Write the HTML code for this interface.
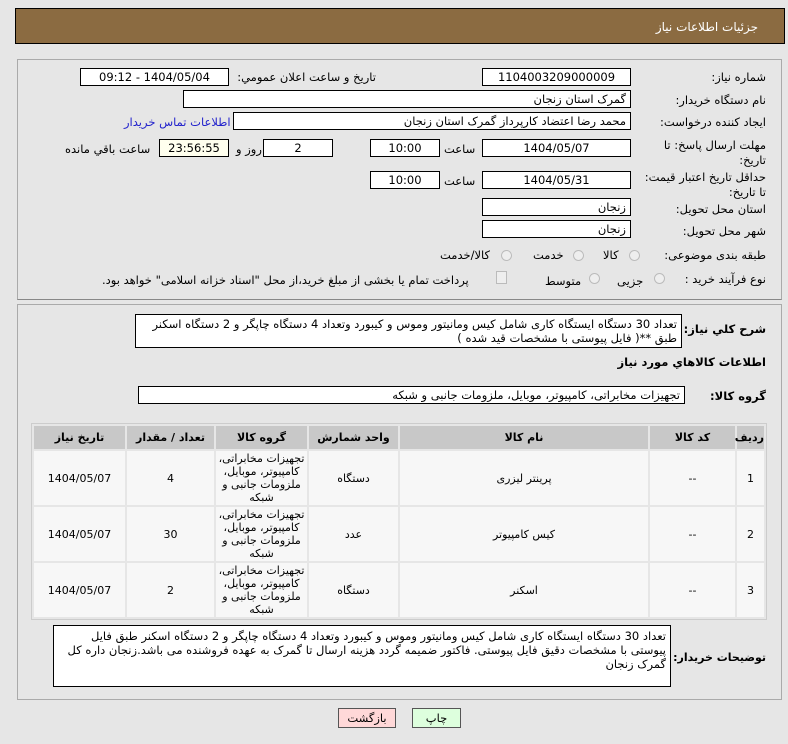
<!DOCTYPE html>
<html><head><meta charset="utf-8"><style>
body{margin:0;width:788px;height:744px;background:#e6e6e6;font-family:"DejaVu Sans","Liberation Sans",sans-serif;font-size:11.5px;color:#000;position:relative;overflow:hidden}
.a{position:absolute;white-space:nowrap}
.b{position:absolute;background:#fff;border:1px solid #000;box-sizing:border-box;direction:rtl;padding:0 4px;line-height:16px;white-space:nowrap;overflow:hidden}
.c{text-align:center}
.l{direction:rtl;text-align:right}
.r{position:absolute;width:11px;height:11px;border-radius:50%;border:1px solid #bbb;background:#eee;box-sizing:border-box}
table{position:absolute;left:31px;top:423px;width:736px;table-layout:fixed;border-collapse:separate;border-spacing:2px;background:#e6e6e6;border:1px solid #ccc;direction:rtl}
td,th{text-align:center;font-size:11px;padding:0}
th{background:#c8c8c8;height:23px;font-weight:bold}
td{background:#f7f7f7;height:54px;line-height:13px}
</style></head><body>
<div class="a" style="left:15px;top:8px;width:768px;height:34px;background:#8b6b41;border:1px solid #000"></div>
<div class="a" style="right:30px;top:20px;color:#fff;font-size:12px">جزئیات اطلاعات نیاز</div>
<div class="a" style="left:17px;top:59px;width:763px;height:239px;border:1px solid #aaa;border-bottom-color:#888"></div>
<div class="a" style="left:17px;top:304px;width:763px;height:394px;border:1px solid #aaa"></div>

<div class="a l" style="right:22px;top:70px">شماره نیاز:</div>
<div class="b c" style="left:482px;top:68px;width:149px;height:18px">1104003209000009</div>
<div class="a l" style="right:412px;top:70px">تاریخ و ساعت اعلان عمومي:</div>
<div class="b c" style="left:80px;top:68px;width:149px;height:18px">1404/05/04 - 09:12</div>

<div class="a l" style="right:22px;top:93px">نام دستگاه خريدار:</div>
<div class="b" style="left:183px;top:90px;width:448px;height:18px">گمرک استان زنجان</div>

<div class="a l" style="right:22px;top:115px">ایجاد کننده درخواست:</div>
<div class="b" style="left:233px;top:112px;width:398px;height:18px">محمد رضا اعتضاد کارپرداز گمرک استان زنجان</div>
<div class="a l" style="left:124px;top:115px;color:#2222cc">اطلاعات تماس خریدار</div>

<div class="a l" style="right:22px;top:138px;line-height:15px;text-align:right">مهلت ارسال پاسخ: تا<br>تاریخ:</div>
<div class="b c" style="left:482px;top:139px;width:149px;height:18px">1404/05/07</div>
<div class="a" style="left:444px;top:142px">ساعت</div>
<div class="b c" style="left:370px;top:139px;width:70px;height:18px">10:00</div>
<div class="b c" style="left:263px;top:139px;width:70px;height:18px">2</div>
<div class="a l" style="left:236px;top:142px">روز و</div>
<div class="b c" style="left:159px;top:139px;width:70px;height:18px;background:#ffffee">23:56:55</div>
<div class="a l" style="left:65px;top:142px">ساعت باقي مانده</div>

<div class="a l" style="right:22px;top:170px;line-height:15px;text-align:right">حداقل تاریخ اعتبار قیمت:<br>تا تاریخ:</div>
<div class="b c" style="left:482px;top:171px;width:149px;height:18px">1404/05/31</div>
<div class="a" style="left:444px;top:174px">ساعت</div>
<div class="b c" style="left:370px;top:171px;width:70px;height:18px">10:00</div>

<div class="a l" style="right:22px;top:202px">استان محل تحویل:</div>
<div class="b" style="left:482px;top:198px;width:149px;height:18px">زنجان</div>
<div class="a l" style="right:22px;top:224px">شهر محل تحویل:</div>
<div class="b" style="left:482px;top:220px;width:149px;height:18px">زنجان</div>

<div class="a l" style="right:22px;top:248px">طبقه بندی موضوعی:</div>
<div class="r" style="left:629px;top:250px"></div><div class="a" style="left:603px;top:248px">کالا</div>
<div class="r" style="left:573px;top:250px"></div><div class="a" style="left:533px;top:248px">خدمت</div>
<div class="r" style="left:501px;top:250px"></div><div class="a" style="left:440px;top:248px">کالا/خدمت</div>

<div class="a l" style="right:22px;top:272px">نوع فرآیند خرید :</div>
<div class="r" style="left:654px;top:273px"></div><div class="a" style="left:617px;top:274px">جزیی</div>
<div class="r" style="left:589px;top:273px"></div><div class="a" style="left:545px;top:274px">متوسط</div>
<div class="a" style="left:496px;top:271px;width:9px;height:11px;border:1px solid #bbb;background:#eee"></div>
<div class="a l" style="left:102px;top:273px">پرداخت تمام یا بخشی از مبلغ خرید،از محل "اسناد خزانه اسلامی" خواهد بود.</div>

<div class="a l" style="right:22px;top:322px;font-weight:bold">شرح کلي نياز:</div>
<div class="b" style="left:135px;top:314px;width:547px;height:34px;white-space:normal;line-height:14px;padding-top:2px">تعداد 30 دستگاه ایستگاه کاری شامل کیس ومانیتور وموس و کیبورد وتعداد 4 دستگاه چاپگر و 2 دستگاه اسکنر طبق **( فایل پیوستی با مشخصات قید شده )</div>
<div class="a l" style="right:22px;top:355px;font-weight:bold">اطلاعات کالاهاي مورد نياز</div>
<div class="a l" style="right:22px;top:389px;font-weight:bold">گروه کالا:</div>
<div class="b" style="left:138px;top:386px;width:547px;height:18px">تجهیزات مخابراتی، کامپیوتر، موبایل، ملزومات جانبی و شبکه</div>

<table>
<tr><th style="width:27px">ردیف</th><th style="width:85px">کد کالا</th><th style="width:248px">نام کالا</th><th style="width:89px">واحد شمارش</th><th style="width:91px">گروه کالا</th><th style="width:87px">تعداد / مقدار</th><th>تاریخ نیاز</th></tr>
<tr><td>1</td><td>--</td><td>پرینتر لیزری</td><td>دستگاه</td><td>تجهیزات مخابراتی، کامپیوتر، موبایل، ملزومات جانبی و شبکه</td><td>4</td><td>1404/05/07</td></tr>
<tr><td>2</td><td>--</td><td>کیس کامپیوتر</td><td>عدد</td><td>تجهیزات مخابراتی، کامپیوتر، موبایل، ملزومات جانبی و شبکه</td><td>30</td><td>1404/05/07</td></tr>
<tr><td>3</td><td>--</td><td>اسکنر</td><td>دستگاه</td><td>تجهیزات مخابراتی، کامپیوتر، موبایل، ملزومات جانبی و شبکه</td><td>2</td><td>1404/05/07</td></tr>
</table>

<div class="a l" style="right:22px;top:651px;font-weight:bold;font-size:11px">توضیحات خریدار:</div>
<div class="b" style="left:53px;top:625px;width:618px;height:62px;white-space:normal;line-height:14px;padding-top:3px">تعداد 30 دستگاه ایستگاه کاری شامل کیس ومانیتور وموس و کیبورد وتعداد 4 دستگاه چاپگر و 2 دستگاه اسکنر طبق فایل پیوستی با مشخصات دقیق فایل پیوستی. فاکتور ضمیمه گردد هزینه ارسال تا گمرک به عهده فروشنده می باشد.زنجان داره کل گمرک زنجان</div>

<div class="a c" style="left:338px;top:708px;width:58px;height:20px;background:#ffd8d8;border:1px solid #555;box-sizing:border-box;line-height:18px">بازگشت</div>
<div class="a c" style="left:412px;top:708px;width:49px;height:20px;background:#ddffdd;border:1px solid #555;box-sizing:border-box;line-height:18px">چاپ</div>
</body></html>
